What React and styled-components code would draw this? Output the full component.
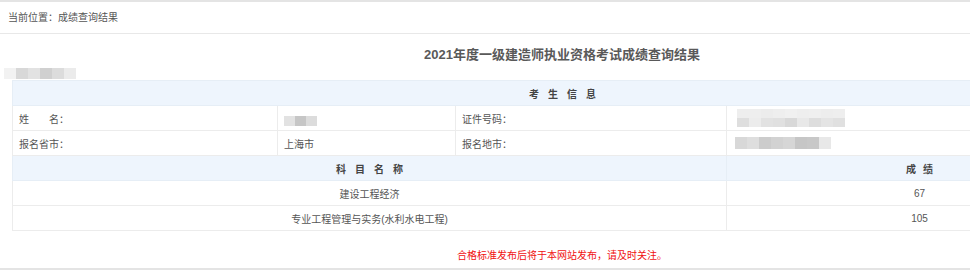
import React from "react";
import styled, { createGlobalStyle } from "styled-components";

const Global = createGlobalStyle`
  html, body { margin: 0; padding: 0; background: #fff; overflow: hidden; }
  body { font-family: "Liberation Sans", "Noto Sans CJK SC", sans-serif; }
`;

const Page = styled.div`
  width: 1124px;
  height: 266px;
  border-top: 2px solid #e4e4e4;
  border-bottom: 2px solid #e4e4e4;
  display: flex;
  flex-direction: column;
`;

const Crumb = styled.div`
  height: 31px;
  line-height: 31px;
  padding-left: 8px;
  font-size: 10px;
  color: #555;
  border-bottom: 1px solid #e8e8e8;
`;

const Title = styled.h1`
  margin: 0;
  height: 26px;
  padding-top: 8px;
  line-height: 26px;
  text-align: center;
  font-size: 13px;
  font-weight: bold;
  color: #595959;
`;

const MosaicRow = styled.div`
  height: 12px;
  padding-left: 4px;
  display: flex;
  align-items: flex-start;
`;

const Grid = styled.div`
  display: flex;
  flex-direction: column;
`;

const GridLine = styled.div`
  display: flex;
`;

const Px = styled.span`
  display: block;
  width: ${(p) => p.$w}px;
  height: ${(p) => p.$h}px;
`;

const Mosaic = ({ rows, w = 11, h = 10, offset = 0 }) => (
  <Grid style={offset ? { transform: `translateY(${offset}px)` } : undefined}>
    {rows.map((r, i) => (
      <GridLine key={i}>
        {r.map((c, j) => (
          <Px key={j} $w={w} $h={h} style={{ background: c }} />
        ))}
      </GridLine>
    ))}
  </Grid>
);

const TableWrap = styled.div`
  padding-left: 12px;
`;

const Table = styled.table`
  width: 1100px;
  border-collapse: collapse;
  table-layout: fixed;
  font-size: 10px;
  color: #555;
`;

const Head = styled.td`
  height: 24px;
  background: #eef5fd;
  border: 1px solid #e6eef6;
  text-align: center;
  font-weight: bold;
  color: #444;
  letter-spacing: ${(p) => p.$sp || 9}px;
  padding: 0 0 0 ${(p) => p.$sp || 9}px;
`;

const Cell = styled.td`
  height: 24px;
  border: 1px solid #ececec;
  padding: 0 0 0 6px;
  text-align: ${(p) => (p.$center ? "center" : "left")};
  ${(p) => p.$center && "padding: 0;"}
  overflow: visible;
  white-space: nowrap;
`;

const Notice = styled.div`
  flex: 1;
  display: flex;
  align-items: center;
  justify-content: center;
  padding-top: 9px;
  font-size: 10px;
  color: #f01010;
`;

export default function App() {
  return (
    <>
      <Global />
      <Page>
        <Crumb>当前位置：成绩查询结果</Crumb>
        <Title>2021年度一级建造师执业资格考试成绩查询结果</Title>
        <MosaicRow>
          <Mosaic
            w={12}
            h={11}
            rows={[["#f2f2f2", "#d8d8d8", "#e2e2e2", "#d0d0d0", "#dcdcdc", "#ebebeb"]]}
          />
        </MosaicRow>
        <TableWrap>
          <Table>
            <colgroup>
              <col style={{ width: 265 }} />
              <col style={{ width: 178 }} />
              <col style={{ width: 271 }} />
              <col style={{ width: 386 }} />
            </colgroup>
            <tbody>
              <tr>
                <Head colSpan={4}>考生信息</Head>
              </tr>
              <tr>
                <Cell>姓　　名：</Cell>
                <Cell>
                  <Mosaic
                    w={11}
                    h={10}
                    offset={3}
                    rows={[["#e2e2e2", "#c6c6c6", "#dcdcdc"]]}
                  />
                </Cell>
                <Cell>证件号码：</Cell>
                <Cell style={{ paddingLeft: 10 }}>
                  <Mosaic
                    w={12}
                    h={9}
                    rows={[
                      ["#eeeeee", "#eeeeee", "#ececec", "#eeeeee", "#f0f0f0", "#eeeeee", "#efefef", "#ededed", "#eeeeee"],
                      ["#dedede", "#ececec", "#e2e2e2", "#e0e0e0", "#d8d8d8", "#e8e8e8", "#dddddd", "#e4e4e4", "#e0e0e0"],
                    ]}
                  />
                </Cell>
              </tr>
              <tr>
                <Cell>报名省市：</Cell>
                <Cell>上海市</Cell>
                <Cell>报名地市：</Cell>
                <Cell style={{ paddingLeft: 8 }}>
                  <Mosaic
                    w={12}
                    h={12}
                    rows={[["#d8d8d8", "#dedede", "#cccccc", "#d2d2d2", "#d6d6d6", "#c6c6c6", "#c8c8c8", "#e8e8e8"]]}
                  />
                </Cell>
              </tr>
              <tr>
                <Head colSpan={3}>科目名称</Head>
                <Head $sp={7}>成绩</Head>
              </tr>
              <tr>
                <Cell colSpan={3} $center>建设工程经济</Cell>
                <Cell $center>67</Cell>
              </tr>
              <tr>
                <Cell colSpan={3} $center>专业工程管理与实务(水利水电工程)</Cell>
                <Cell $center>105</Cell>
              </tr>
            </tbody>
          </Table>
        </TableWrap>
        <Notice>合格标准发布后将于本网站发布，请及时关注。</Notice>
      </Page>
    </>
  );
}
